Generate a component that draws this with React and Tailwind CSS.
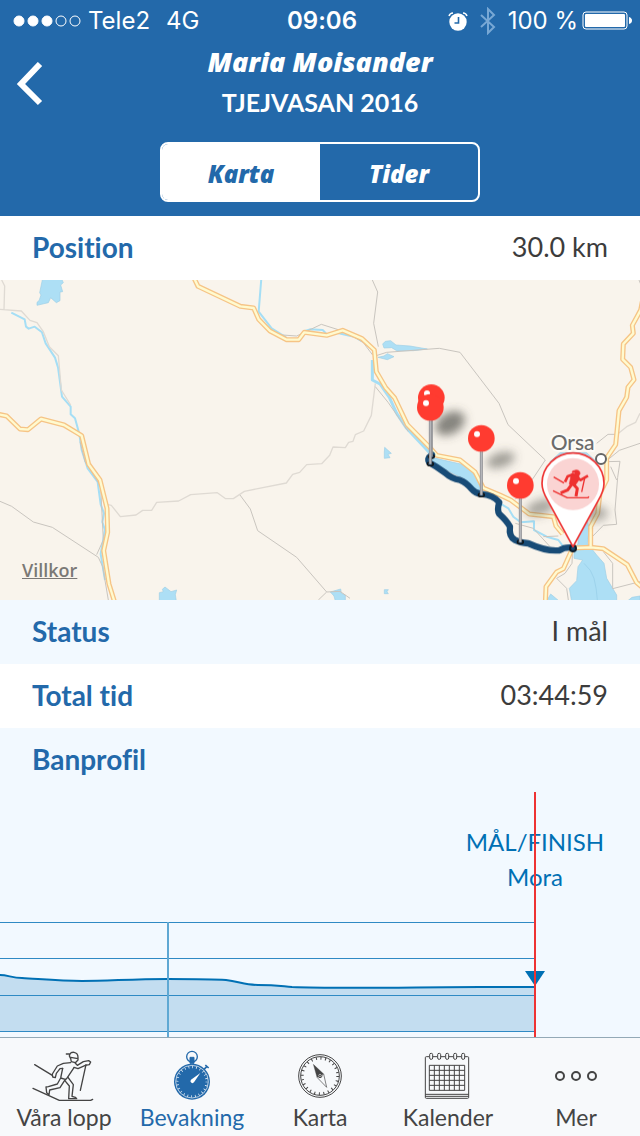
import React, { useState } from 'react';

const rows = {
  position: { label: 'Position', value: '30.0 km' },
  status: { label: 'Status', value: 'I mål' },
  total: { label: 'Total tid', value: '03:44:59' },
};

const roads = [
  'M-10 402 L20 408 L60 447 L84 449 L123 417 L192 435 L245 467 L266 553 L300 600 L321 685 L323 757 L311 812 L327 912 L345 970',
  'M580 -10 L594 19 L721 79 L761 84 L776 118 L810 153 L860 179 L896 179 L913 157 L980 166 L1028 151 L1086 176 L1123 210 L1129 275 L1157 323 L1184 354 L1222 434 L1290 503 L1310 526 L1380 540 L1425 576 L1450 624 L1500 645 L1532 660 L1588 702 L1660 710 L1668 738 L1688 762',
  'M1930 50 L1922 90 L1897 136 L1900 160 L1870 192 L1868 238 L1892 262 L1902 299 L1884 322 L1880 352 L1857 392 L1847 494 L1820 534 L1820 600 L1800 640 L1793 700 L1772 740 L1772 800',
  'M1930 925 L1910 908 L1882 854 L1810 806 L1772 802 L1718 804 L1690 866 L1670 876 L1638 920 L1636 970',
];

const trails = [
  'M5 0 L14 18 L12 88 M0 88 L64 93 L90 121 L111 128 L130 155 L148 200 L175 227 L184 330 L212 375',
  'M321 673 L334 676 L361 710 L408 705 L428 691 L455 691 L470 667 L536 663 L572 644 L652 638 L677 656 L700 656 L733 634 L859 609 L878 583 L899 577 L920 554 L965 551 L989 526 L999 501 L1036 503 L1046 487 L1059 484 L1066 464 L1091 453 L1114 406 L1126 310',
  'M1850 464 L1880 440 L1907 427 L1920 400',
];

const borders = [
  'M0 664 L35 679 L100 726 L157 742 L295 832 L308 860 L325 960',
  'M240 485 L255 545 L290 600 L302 620 L310 780 L290 824',
  'M720 645 L751 687 L773 752 L890 832 L980 936 L955 960 M980 936 L1020 934 L1050 955',
  'M810 155 L848 165 L890 168 L964 133 L1040 157 L1090 188 L1118 225',
  'M1117 0 L1133 36 L1121 130 L1135 200 M1125 228 L1160 217 L1318 205 L1380 217 L1497 370 L1524 434 L1636 540 L1600 594 L1546 658',
  'M1126 320 L1165 368 L1225 455',
  'M1917 0 L1925 20 L1960 60',
  'M1790 490 L1824 463 L1845 463 M1820 545 L1860 544 L1853 592 L1845 690 L1850 733 L1810 736 L1775 772',
  'M1825 538 L1858 511 L1920 490 M1832 560 L1850 600 M1546 730 L1600 745 L1650 800 M1630 770 L1675 768',
  'M1718 806 L1716 850 L1695 880 L1670 895 L1700 925 L1705 960 M1810 815 L1838 850 L1838 926 L1920 905',
];

const pins = [
  { x: 1294, y: 353, foot: 530 },
  { x: 1291, y: 382, foot: 552 },
  { x: 1444, y: 475, foot: 645 },
  { x: 1561, y: 616, foot: 786 },
];

function SignalDots() {
  return (
    <svg className="h-4 w-[70px]" viewBox="0 0 70 16" fill="none" stroke="white">
      <circle cx="7" cy="8" r="5" fill="white" />
      <circle cx="21" cy="8" r="5" fill="white" />
      <circle cx="35" cy="8" r="5" fill="white" />
      <circle cx="49" cy="8" r="5" />
      <circle cx="63" cy="8" r="5" />
    </svg>
  );
}

function StatusBar() {
  return (
    <div className="grid h-10 grid-cols-3 items-center pt-px pr-2 pl-3 font-['Inter',sans-serif] text-2xl">
      <div className="flex items-center whitespace-nowrap">
        <SignalDots />
        <span className="ml-1.5">Tele2</span>
        <span className="ml-4">4G</span>
      </div>
      <div className="text-center font-semibold">09:06</div>
      <div className="flex items-center justify-end whitespace-nowrap">
        {/* Alarm */}
        <svg className="mr-3 h-5 w-5 shrink-0" viewBox="0 0 20 20" fill="none" stroke="white">
          <circle cx="10" cy="11" r="8.7" fill="white" stroke="none" />
          <path d="M1 5 Q2 2 5 2 M19 5 Q18 2 15 2" strokeWidth="1.5" />
          <path d="M10.5 6 V12 H6.5" stroke="#2369aa" strokeWidth="1.6" />
        </svg>
        {/* Bluetooth */}
        <svg className="mr-3 h-7 w-4 shrink-0" viewBox="0 0 16 28" fill="none" stroke="#78a8d5" strokeWidth="2">
          <path d="M1 8 L14 20 L8 26 V2 L14 8 L1 20" />
        </svg>
        <span>100 %</span>
        {/* Battery */}
        <svg className="ml-1 h-5 w-[50px] shrink-0" viewBox="0 0 50 20" fill="none">
          <rect x="1" y="1" width="44" height="17" rx="3" stroke="white" />
          <rect x="3" y="3" width="40" height="13" rx="1" fill="white" />
          <path d="M47 6 Q50 7 50 9.500 Q50 12 47 13 Z" fill="white" />
        </svg>
      </div>
    </div>
  );
}

function Header({ view, onChange }) {
  const active = 'bg-white text-[#2369aa]';
  return (
    <header className="bg-[#2369aa] pb-[14px] text-white">
      <StatusBar />
      <div className="grid grid-cols-[60px_1fr_60px]">
        <button type="button" aria-label="Tillbaka" className="flex items-start justify-center pt-[22px]">
          <svg className="h-11 w-8" viewBox="0 0 32 44" fill="none" stroke="white" strokeWidth="6">
            <path d="M26 2 L7 22 L26 41" />
          </svg>
        </button>
        <div className="pt-1 text-center">
          <h1 className="font-['Open_Sans',sans-serif] text-[27px] leading-9 font-extrabold italic">Maria Moisander</h1>
          <p className="pt-1 pb-[22px] text-[25px] leading-9 font-bold">TJEJVASAN 2016</p>
        </div>
      </div>
      <div className="mx-auto flex h-15 w-1/2 overflow-hidden rounded-lg border-2 border-white font-['Open_Sans',sans-serif] text-2xl font-extrabold italic">
        <button type="button" onClick={() => onChange('karta')} className={`flex-1 pt-1 ${view === 'karta' ? active : ''}`}>
          Karta
        </button>
        <button type="button" onClick={() => onChange('tider')} className={`flex-1 pt-1 ${view === 'tider' ? active : ''}`}>
          Tider
        </button>
      </div>
    </header>
  );
}

function InfoRow({ label, value, tinted }) {
  return (
    <div className={`flex h-16 items-center justify-between px-8 pb-0.5 ${tinted ? 'bg-[#f2f9ff]' : 'bg-white'}`}>
      <span className="text-[28px] font-bold text-[#2369aa]">{label}</span>
      <span className="text-[27px] text-[#3c3c3c]">{value}</span>
    </div>
  );
}

function MapView() {
  return (
    <div className="relative bg-[#f9f4ec]">
      <svg className="block w-full" viewBox="0 0 1920 960" fill="none" strokeLinejoin="round">
        <defs>
          <filter id="shadow" x="-50%" y="-50%" width="200%" height="200%">
            <feGaussianBlur stdDeviation="14" />
          </filter>
        </defs>

        {/* Lakes */}
        <g fill="#addff5" stroke="#9fcfe6" strokeWidth="2">
          <path d="M128 -5 L119 38 L123 45 L117 62 L111 67 V76 L145 68 L152 53 L169 68 L180 62 V36 L188 35 L182 15 L190 8 L184 -5 Z" />
          <path d="M478 970 V938 L490 935 L487 928 L495 921 L513 935 L530 930 L526 944 L530 970 Z" />
          <path d="M1148 192 L1156 184 L1172 182 L1188 195 L1230 198 L1282 207 L1240 212 L1190 212 L1175 203 L1152 204 Z" />
          <path d="M1134 232 L1152 228 L1162 221 L1182 230 L1162 239 Z" />
          <path d="M1154 502 L1174 520 L1164 523 L1170 533 L1153 535 V516 Z" />
          <path d="M991 936 L1022 927 L1024 940 L1036 945 V970 L1008 970 L1002 948 Z" />
          <path d="M1153 929 H1165 L1161 935 L1165 941 H1153 Z" />
          <path d="M1292 530 L1320 538 L1382 552 L1413 570 L1428 592 L1438 616 L1444 635 L1420 625 L1390 595 L1350 575 L1300 550 Z" />
          <path d="M1650 545 L1680 518 L1760 518 L1790 545 L1760 580 L1680 580 Z" />
          <path d="M1758 708 L1768 745 L1762 790 L1790 825 L1812 850 L1820 895 L1850 945 V970 H1716 L1708 925 L1730 902 L1734 860 L1748 840 L1722 835 L1722 812 L1734 790 L1738 740 Z" />
          <path d="M1636 970 L1652 942 L1676 962 V970 Z" />
          <path d="M1880 965 L1896 952 L1920 948 V970 Z" />
        </g>
        <path d="M1752 850 Q1775 870 1782 895 Q1790 925 1792 960" stroke="#9dd3ec" strokeWidth="3" />

        {/* Rivers */}
        <g stroke="#a5def5" strokeWidth="6">
          <path d="M34 98 L74 118 L78 140 L86 146 L104 140 L126 157 L137 190 L165 233 L174 262 L186 350 L212 380 V403 L225 415 L238 462 L245 510 L263 565 L293 606 L302 673 L312 700 L307 726 L315 750 L302 822 L315 900" />
          <path d="M784 -5 L776 95 L815 145 L858 172 M915 153 L930 148 L968 150 L978 160 M1010 158 L1062 170 L1088 185" />
          <path d="M1117 240 V300 L1140 312 L1168 352 L1190 400 L1220 445 L1295 525" strokeWidth="9" />
          <path d="M1500 670 L1525 685 L1540 710 L1562 727 L1602 724 V750 L1640 770 L1675 780 L1690 800" />
        </g>

        <g stroke="#dfdad3" strokeWidth="4">
          {trails.map((d) => <path key={d} d={d} />)}
        </g>
        <g stroke="#c9c5bf" strokeWidth="3">
          {borders.map((d) => <path key={d} d={d} />)}
        </g>
        <g stroke="#f6c486" strokeWidth="15">
          {roads.map((d) => <path key={d} d={d} />)}
        </g>
        <g stroke="#fffacf" strokeWidth="7">
          {roads.map((d) => <path key={d} d={d} />)}
        </g>

        {/* Town */}
        <text
          x="1652"
          y="511"
          fontSize="63"
          fontWeight="500"
          fill="#6b6b6b"
          stroke="#fdfbf7"
          strokeWidth="12"
          paintOrder="stroke"
        >
          Orsa
        </text>
        <circle cx="1803" cy="537" r="15" fill="white" stroke="#666666" strokeWidth="6" />

        {/* Pin shadows */}
        <g fill="#555550" filter="url(#shadow)">
          <ellipse cx="1350" cy="430" rx="48" ry="32" transform="rotate(-30 1350 430)" opacity="0.7" />
          <ellipse cx="1502" cy="540" rx="44" ry="22" transform="rotate(-18 1502 540)" opacity="0.55" />
          <ellipse cx="1622" cy="682" rx="46" ry="22" transform="rotate(-18 1622 682)" opacity="0.5" />
          <ellipse cx="1780" cy="700" rx="44" ry="24" opacity="0.45" />
        </g>

        {/* Route */}
        <path
          d="M1296 524 Q1280 535 1288 548 Q1310 560 1335 578 Q1355 596 1380 600 Q1398 606 1416 628 Q1426 640 1444 642 Q1480 645 1498 667 Q1490 690 1498 702 Q1520 722 1530 740 Q1526 770 1545 780 Q1560 788 1585 790 Q1640 815 1678 811 Q1695 800 1718 803"
          stroke="#184b76"
          strokeWidth="19"
          strokeLinecap="round"
        />

        {pins.map((pin) => (
          <g key={pin.foot}>
            <ellipse cx={pin.x} cy={pin.foot} rx="9" ry="5" stroke="#111111" strokeWidth="4" />
            <path d={`M${pin.x} ${pin.y} V${pin.foot}`} stroke="#909196" strokeWidth="9" />
            <path d={`M${pin.x} ${pin.y} V${pin.foot}`} stroke="#b5b6ba" strokeWidth="4" />
            <circle cx={pin.x} cy={pin.y} r="40" fill="#ff3b30" />
            <circle cx={pin.x - 13} cy={pin.y - 13} r="9" fill="white" />
          </g>
        ))}

        {/* Runner marker */}
        <circle cx="1719" cy="805" r="9" stroke="#0c1c2c" strokeWidth="6" />
        <path
          d="M1719 800 L1644 663 C1628 636 1626 620 1626 610 A93 91 0 0 1 1812 610 C1812 620 1810 636 1794 663 Z"
          fill="white"
          stroke="#ee3535"
          strokeWidth="5"
        />
        <circle cx="1719" cy="612" r="78" fill="#fad4d3" />
        <g stroke="#ee3130">
          <path d="M1661 591 L1692 609 M1659 632 L1702 653 H1764 L1767 650 M1755 590 L1745 636" strokeWidth="4" />
          <path d="M1722 582 L1703 589 L1695 606" strokeWidth="8" />
          <path d="M1727 590 L1742 600 L1764 587" strokeWidth="8" />
          <path d="M1716 612 L1703 630 L1682 639" strokeWidth="9" />
          <path d="M1718 610 L1732 626 L1728 649" strokeWidth="9" />
          <path d="M1714 582 H1736 L1738 598 L1724 618 L1708 612 Z" fill="#ee3130" strokeWidth="2" />
          <path d="M1718 573 L1728 570 Q1741 570 1740 582 L1734 588 L1724 583 L1725 577 L1716 578 Z" fill="#ee3130" strokeWidth="2" />
        </g>
      </svg>
      <a
        href="#villkor"
        className="absolute bottom-4 left-[22px] font-['Open_Sans',sans-serif] text-lg font-semibold text-[#7b7976] underline"
      >
        Villkor
      </a>
    </div>
  );
}

function CourseProfile() {
  return (
    <svg className="block w-full bg-[#f2f9ff]" viewBox="0 0 640 245" fill="none">
      <path
        d="M0 183 C8 183 12 186 22 186 C40 187 60 189 82 189 C110 189 130 187 168 187 C190 187 212 187 226 188 C240 190 246 193 258 193 C275 193 280 194 292 195 C340 197 420 195 480 195 L535 195 V239 H0 Z"
        fill="#c3ddf0"
      />
      <path
        d="M0 183 C8 183 12 186 22 186 C40 187 60 189 82 189 C110 189 130 187 168 187 C190 187 212 187 226 188 C240 190 246 193 258 193 C275 193 280 194 292 195 C340 197 420 195 480 195 L535 195"
        stroke="#0070b4"
        strokeWidth="2"
      />
      <path d="M0 130.500 H535 M0 166.500 H535 M0 203.500 H535 M0 239.500 H535" stroke="#2f8ac4" />
      <path d="M168 130 V245" stroke="#5fa8d3" strokeWidth="2" />
      <g fontSize="24" fill="#0070b4" textAnchor="middle">
        <text x="535" y="59">MÅL/FINISH</text>
        <text x="535" y="94">Mora</text>
      </g>
      <path d="M525 179 H545 L535 194 Z" fill="#0070b4" />
      <path d="M535 0 V245" stroke="#ee3333" strokeWidth="2" />
    </svg>
  );
}

function SkierIcon() {
  return (
    <svg className="h-[52px] w-16" viewBox="96 42 192 156" fill="none" stroke="currentColor" strokeWidth="4" strokeLinecap="round" strokeLinejoin="round">
      <path d="M104 86 L157 118 M99 157 L178 193 H272 L278 190 M258 86 L241 163" />
      <path d="M210 54 H199 M210 54 Q213 48 222 49 Q234 51 234 64 V72 L226 80 L214 77 L212 68 L208 60 Z M212 64 L234 68" />
      <path d="M212 80 L190 82 L172 90 L157 114 L158 123 L166 125 L169 112 L180 98 L188 97 M226 82 L232 88 L250 77 L266 74 L272 78 L268 86 L256 88 L234 98 L222 94" />
      <path d="M188 97 L182 126 L172 144 L145 152 L138 153 L140 170 L147 177 L149 162 L180 155 L194 133 L202 125 L222 95 M182 126 L198 131" />
      <path d="M194 133 L208 150 L206 188 H230 L226 184 L216 181 L220 146 L204 124" />
    </svg>
  );
}

function StopwatchIcon() {
  return (
    <svg className="h-[52px] w-16" viewBox="480 42 192 156" fill="none" stroke="currentColor">
      <circle cx="576" cy="62" r="16" strokeWidth="4" />
      <path d="M570 64 H582 V82 H570 Z" fill="currentColor" strokeWidth="3" />
      <path d="M612 100 L621 91 M616 87 L626 96" strokeWidth="5" />
      <circle cx="576" cy="137" r="54" fill="currentColor" stroke="none" />
      <circle cx="576" cy="137" r="49" stroke="white" strokeWidth="2" />
      <circle cx="576" cy="137" r="44" stroke="white" strokeWidth="7" strokeDasharray="2 9.500" />
      <path d="M601 111 L582 139 A6 6 0 1 1 573 131 Z" fill="white" stroke="none" />
    </svg>
  );
}

function CompassIcon() {
  return (
    <svg className="h-[52px] w-16" viewBox="114 42 192 156" fill="none" stroke="currentColor" strokeWidth="3">
      <circle cx="210" cy="120" r="64" />
      <circle cx="210" cy="120" r="58" />
      <circle cx="210" cy="120" r="53" strokeWidth="8" strokeDasharray="3 10.870" />
      <path d="M190 85 L221 114 L201 124 Z" fill="currentColor" strokeWidth="1" />
      <path d="M221 114 L230 154 L201 124" strokeWidth="2" />
      <circle cx="210" cy="119" r="6" fill="white" />
      <circle cx="210" cy="119" r="2" fill="currentColor" />
    </svg>
  );
}

function CalendarIcon() {
  return (
    <svg className="h-[52px] w-16" viewBox="498 42 192 156" fill="none" stroke="currentColor" strokeWidth="3">
      <path d="M537 62 H529 Q526 62 526 65 V184 Q526 187 529 187 H653 Q656 187 656 184 V65 Q656 62 653 62 H645 M549 62 H561 M573 62 H585 M597 62 H609 M621 62 H633 M526 175 H656 M526 181 H656" />
      {[543, 567, 591, 615, 639].map((x) => (
        <rect key={x} x={x - 4} y="52" width="9" height="18" rx="4" />
      ))}
      <path d="M538 88 H644 V163 H538 Z M538 103 H644 M538 118 H644 M538 133 H644 M538 148 H644 M553 88 V163 M568 88 V163 M583 88 V163 M598 88 V163 M613 88 V163 M628 88 V163" />
    </svg>
  );
}

function MoreIcon() {
  return (
    <svg className="h-[52px] w-16" viewBox="882 42 192 156" fill="none" stroke="currentColor" strokeWidth="6">
      <circle cx="930" cy="120" r="12" />
      <circle cx="978" cy="120" r="12" />
      <circle cx="1026" cy="120" r="12" />
    </svg>
  );
}

const tabs = [
  { label: 'Våra lopp', icon: SkierIcon },
  { label: 'Bevakning', icon: StopwatchIcon },
  { label: 'Karta', icon: CompassIcon },
  { label: 'Kalender', icon: CalendarIcon },
  { label: 'Mer', icon: MoreIcon },
];

export default function App() {
  const [view, setView] = useState('karta');
  const [tab, setTab] = useState('Bevakning');

  return (
    <div className="flex min-h-screen flex-col bg-[#f2f9ff] font-['Lato',sans-serif] [font-variant-ligatures:none]">
      <Header view={view} onChange={setView} />
      <main className="flex-1">
        <InfoRow {...rows.position} />
        <MapView />
        <InfoRow {...rows.status} tinted />
        <InfoRow {...rows.total} />
        <InfoRow label="Banprofil" tinted />
        <CourseProfile />
      </main>
      <nav className="sticky bottom-0 grid grid-cols-5 border-t border-[#93a9b6] bg-[#f7f9fb] pt-3 pb-1">
        {tabs.map(({ label, icon: Icon }) => (
          <button
            key={label}
            type="button"
            onClick={() => setTab(label)}
            className={`flex flex-col items-center text-[23px] leading-[30px] ${tab === label ? 'text-[#2369aa]' : 'text-[#444444]'}`}
          >
            <Icon />
            {label}
          </button>
        ))}
      </nav>
    </div>
  );
}
